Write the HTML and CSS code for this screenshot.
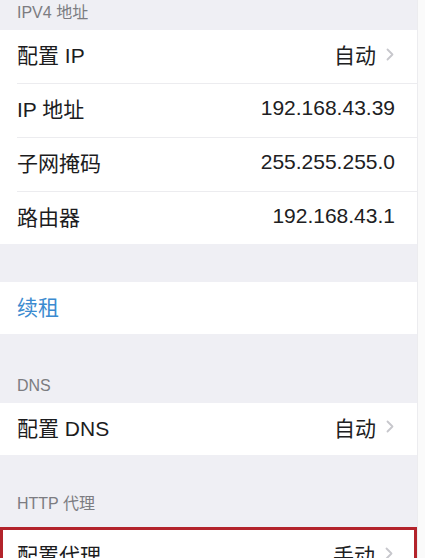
FILE: index.html
```html
<!DOCTYPE html>
<html lang="zh-CN">
<head>
    <meta charset="UTF-8">
    <meta name="viewport" content="width=device-width, initial-scale=1.0">
    <title>IPV4 地址</title>
    <link rel="stylesheet" href="styles.css">
</head>
<body>
    <div class="screen">
        <div class="section-header first">IPV4 地址</div>
        <div class="group">
            <div class="row">
                <span class="label">配置 IP</span>
                <span class="value">自动<svg class="chevron" width="8" height="13" viewBox="0 0 8 13"><path d="M1.5 1.5 L6.5 6.5 L1.5 11.5" fill="none" stroke="#c7c7cc" stroke-width="1.8" stroke-linecap="round" stroke-linejoin="round"/></svg></span>
            </div>
            <div class="row">
                <span class="label">IP 地址</span>
                <span class="value">192.168.43.39</span>
            </div>
            <div class="row">
                <span class="label">子网掩码</span>
                <span class="value">255.255.255.0</span>
            </div>
            <div class="row">
                <span class="label">路由器</span>
                <span class="value">192.168.43.1</span>
            </div>
        </div>

        <div class="spacer"></div>
        <div class="group">
            <div class="row">
                <span class="label link">续租</span>
            </div>
        </div>

        <div class="section-header dns">DNS</div>
        <div class="group">
            <div class="row">
                <span class="label">配置 DNS</span>
                <span class="value">自动<svg class="chevron" width="8" height="13" viewBox="0 0 8 13"><path d="M1.5 1.5 L6.5 6.5 L1.5 11.5" fill="none" stroke="#c7c7cc" stroke-width="1.8" stroke-linecap="round" stroke-linejoin="round"/></svg></span>
            </div>
        </div>

        <div class="section-header proxy">HTTP 代理</div>
        <div class="group highlight">
            <div class="row">
                <span class="label">配置代理</span>
                <span class="value">手动<svg class="chevron" width="8" height="13" viewBox="0 0 8 13"><path d="M1.5 1.5 L6.5 6.5 L1.5 11.5" fill="none" stroke="#c7c7cc" stroke-width="1.8" stroke-linecap="round" stroke-linejoin="round"/></svg></span>
            </div>
        </div>
    </div>
</body>
</html>
```

FILE: styles.css
```css
body {
    margin: 0;
    background: #fafafa;
    font-family: 'Liberation Sans', 'Noto Sans CJK SC', sans-serif;
    color: #1c1c1e;
    overflow: hidden;
}
.screen {
    width: 417px;
    background: #efeff4;
    border-right: 1px solid #ececef;
    min-height: 600px;
}
.section-header {
    font-size: 16px;
    color: #7c7c81;
    padding: 0 17px;
    display: flex;
    align-items: flex-end;
}
.section-header.first {
    height: 30px;
    padding-bottom: 7px;
    box-sizing: border-box;
}
.section-header.dns {
    height: 69px;
    padding-bottom: 8px;
    box-sizing: border-box;
}
.section-header.proxy {
    height: 73px;
    padding-bottom: 14px;
    box-sizing: border-box;
}
.spacer {
    height: 38px;
}
.group {
    background: #ffffff;
}
.row {
    display: flex;
    align-items: center;
    justify-content: space-between;
    box-sizing: border-box;
    height: 54px;
    margin-left: 17px;
    padding-right: 22px;
    padding-bottom: 5px;
    font-size: 21px;
    border-bottom: 1px solid #ececef;
}
.row:last-child {
    border-bottom: none;
    height: 52px;
}
.value {
    display: flex;
    align-items: center;
    color: #202022;
}
.chevron {
    margin-left: 10px;
    margin-right: 1px;
}
.link {
    color: #3b8bd0;
}
.highlight {
    border: 3px solid #b3232b;
    border-bottom: none;
    margin-top: -1px;
}
.highlight .row {
    margin-left: 14px;
    padding-right: 20px;
}
```
